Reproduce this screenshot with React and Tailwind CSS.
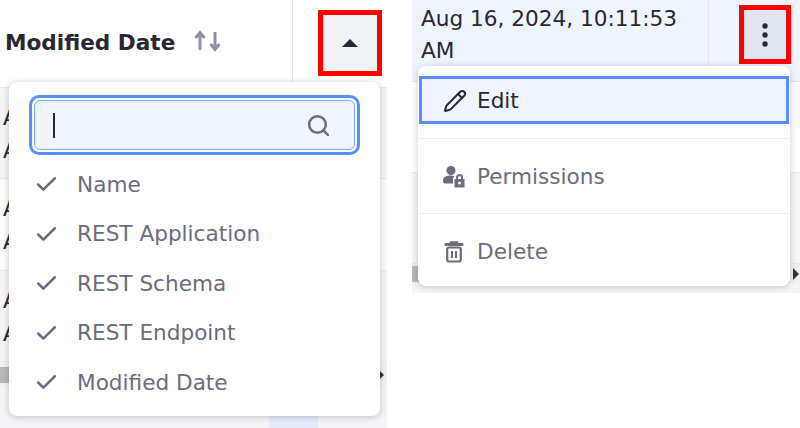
import React from "react";
import { Check, Search, Pencil } from "lucide-react";

const dateText = "Aug 16, 2024, 10:11:53 AM";

function Row({ h, bg, children }) {
  return (
    <div className={`flex border-b border-[#e7e7ed] ${h} ${bg}`}>{children}</div>
  );
}

function DateCell() {
  return <div className="w-[260px] pl-[3px] pt-[13px] text-[21.6px] leading-[33px] text-[#272833]">{dateText}</div>;
}

function ColumnItem({ label }) {
  return (
    <div className="flex h-[49.5px] items-center pl-[25px] pt-[2px] text-[#6b6c7e]">
      <Check size={25} strokeWidth={2.400} />
      <span className="ml-[18px] text-[21.6px]">{label}</span>
    </div>
  );
}

function SortIcon() {
  return (
    <svg width="28" height="22" viewBox="0 0 28 22" fill="none" className="ml-[19px] mb-[4px] text-[#8f909f]">
      <path d="M6 20V3M1.500 8 6 2.500 10.500 8" stroke="currentColor" strokeWidth="3" />
      <path d="M21 2v17M16.500 14 21 19.500 25.500 14" stroke="currentColor" strokeWidth="3" />
    </svg>
  );
}

function UserLock() {
  return (
    <svg width="24" height="24" viewBox="0 0 24 24" fill="currentColor">
      <circle cx="9" cy="5.500" r="4.500" />
      <path d="M1 16c0-4 3-5.500 8-5.500 1.400 0 2.600.2 3.600.5-.9.8-1.500 1.800-1.600 3v4.500H4c-2 0-3-.5-3-2.500z" />
      <path fillRule="evenodd" d="M14 14v-1.500a3.500 3.500 0 0 1 7 0V14h1.500v8.500H12.500V14zM16 14h3v-1.500a1.500 1.500 0 0 0-3 0zM17.500 16.500a1.500 1.500 0 1 0 0 3 1.500 1.500 0 0 0 0-3z" />
    </svg>
  );
}

function Trash() {
  return (
    <svg width="24" height="24" viewBox="0 0 24 24" fill="none">
      <path d="M4 4.500h16" stroke="currentColor" strokeWidth="3" strokeLinecap="round" />
      <path d="M9 2.500h6" stroke="currentColor" strokeWidth="2.500" strokeLinecap="round" />
      <rect x="5.200" y="7.500" width="13.600" height="14" rx="2" stroke="currentColor" strokeWidth="2.200" />
      <path d="M10 11v7M14 11v7" stroke="currentColor" strokeWidth="2" />
    </svg>
  );
}

function Kebab() {
  return (
    <svg width="8" height="26" viewBox="0 0 8 26" fill="#272833">
      <circle cx="4" cy="4" r="2.700" />
      <circle cx="4" cy="13" r="2.700" />
      <circle cx="4" cy="22" r="2.700" />
    </svg>
  );
}

function LeftPane() {
  return (
    <div className="relative h-full w-[387px] shrink-0">
      <div className="flex h-[88px] border-b border-[#e7e7ed] bg-white">
        <div className="flex h-[82px] w-[293px] items-center border-r border-[#e7e7ed] pl-[5px] pt-[4px]">
          <span className="text-[21.6px] font-bold text-[#272833]">Modified Date</span>
          <SortIcon />
        </div>
        <div className="pl-[25px] pt-[10px]">
          <div className="flex h-[66px] w-[64px] items-center justify-center border-[5px] border-[#ff0000] bg-[#f1f2f5]">
            <div className="h-0 w-0 border-x-[8px] border-b-[8px] border-x-transparent border-b-[#272833]" />
          </div>
        </div>
      </div>
      <Row h="h-[91px]" bg="bg-[#f5f5f7]"><DateCell /></Row>
      <Row h="h-[92px]" bg="bg-[#fbfbfc]"><DateCell /></Row>
      <Row h="h-[91px]" bg="bg-[#f5f5f7]"><DateCell /></Row>
      <div className="flex h-[25px] items-center justify-between bg-[#f1f1f1]">
        <div className="h-[16px] w-[10px] bg-[#b8b8b8]" />
        <div className="mr-[3px] h-0 w-0 border-y-[4px] border-l-[4px] border-y-transparent border-l-[#333]" />
      </div>
      <div className="flex h-[41px] justify-start bg-[#f5f5f7] pl-[269px]">
        <div className="h-full w-[49px] bg-[#e6ebf9]" />
      </div>

      <div className="absolute left-[9px] top-[82px] h-[334px] w-[371px] rounded-[8px] bg-white pt-[13px] shadow-[0_1px_6px_rgba(39,40,51,0.25)]">
        <div className="mx-[20px] flex h-[60px] items-center rounded-[10px] border-[3px] border-[#5791ff] p-[2px]">
          <div className="flex h-full w-full items-center justify-between rounded-[6px] border border-[#80acff] bg-[#eff4fd] pl-[18px] pr-[23px]">
            <div className="h-[25px] w-[2px] bg-[#272833]" />
            <Search size={25} strokeWidth={2.400} className="text-[#6b6c7e]" />
          </div>
        </div>
        <div className="pt-[4px]">
          <ColumnItem label="Name" />
          <ColumnItem label="REST Application" />
          <ColumnItem label="REST Schema" />
          <ColumnItem label="REST Endpoint" />
          <ColumnItem label="Modified Date" />
        </div>
      </div>
    </div>
  );
}

function RightPane() {
  return (
    <div className="relative h-full flex-1">
      <div className="flex h-[82px] border-b border-[#e7e7ed] bg-[#eff4fd]">
        <div className="w-[297px] border-r border-[#e1e4ee] pl-[9px] pt-[3px] text-[21.6px] leading-[32px] text-[#272833]">
          {dateText}
        </div>
        <div className="pl-[30px] pt-[5px]">
          <div className="flex h-[59px] w-[52px] items-center justify-center border-[5px] border-[#ff0000] bg-[#e2e6f1]">
            <Kebab />
          </div>
        </div>
      </div>
      <div className="h-[91px] border-b border-[#e7e7ed] bg-white" />
      <div className="h-[91px] border-b border-[#e7e7ed] bg-[#f6f6f8]" />
      <div className="flex h-[20px] items-center justify-between bg-[#f1f1f1]">
        <div className="h-[16px] w-[7px] bg-[#b8b8b8]" />
        <div className="mr-[1px] h-0 w-0 border-y-[6px] border-l-[6px] border-y-transparent border-l-[#333]" />
      </div>
      <div className="h-[9px] bg-[#f5f5f7]" />

      <div className="absolute left-[6px] top-[66px] h-[220px] w-[372px] rounded-[8px] bg-white pt-[10px] shadow-[0_1px_6px_rgba(39,40,51,0.25)]">
        <div className="mx-[1px] flex h-[48px] items-center border-[3px] border-[#5791ff] bg-[#eff4fd] pl-[21px] pt-[2px] text-[#272833]">
          <Pencil size={24} strokeWidth={2} />
          <span className="ml-[10px] text-[21.6px]">Edit</span>
        </div>
        <div className="mt-[14px] h-[76px] border-y border-[#e7e7ed] text-[#6b6c7e]">
          <div className="flex h-full items-center pl-[24px] pt-[2px]">
            <UserLock />
            <span className="ml-[11px] text-[21.6px]">Permissions</span>
          </div>
        </div>
        <div className="flex h-[74px] items-center pl-[24px] pt-[2px] text-[#6b6c7e]">
          <Trash />
          <span className="ml-[11px] text-[21.6px]">Delete</span>
        </div>
      </div>
    </div>
  );
}

export default function App() {
  return (
    <div className="flex h-[428px] w-[800px] gap-[25px] overflow-hidden bg-white font-['DejaVu_Sans',sans-serif]">
      <LeftPane />
      <RightPane />
    </div>
  );
}
